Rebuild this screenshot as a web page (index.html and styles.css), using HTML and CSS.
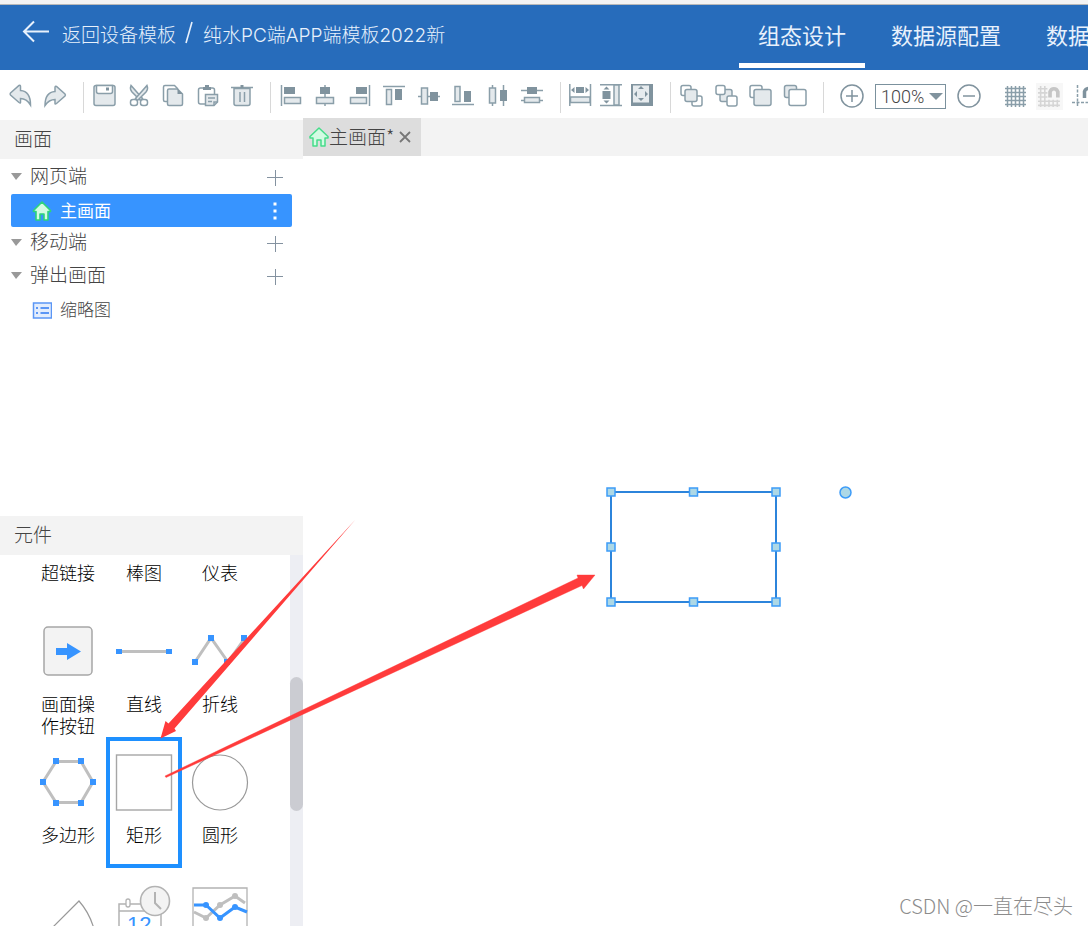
FILE: index.html
```html
<!DOCTYPE html>
<html lang="zh-CN">
<head>
  <meta charset="UTF-8" />
  <meta name="viewport" content="width=device-width, initial-scale=1" />
  <title>组态设计</title>
  <link rel="stylesheet" href="styles.css">
</head>
<body>
  <div class="top-edge"></div>
  <header class="header">
    <div class="crumbs">
      <a class="back" href="#">
        <svg width="28" height="24" viewBox="0 0 28 24"><path d="M12 1.500 2 11.500 12 21.500M2 11.500H27" fill="none" stroke="#e8f1fc" stroke-width="2"/></svg>
        返回设备模板</a>
      <svg class="slash" width="10" height="24" viewBox="0 0 10 24"><path d="M8 1 2 22" stroke="#e8f1fc" stroke-width="1.600"/></svg>
      <span class="project">纯水PC端APP端模板2022新</span>
    </div>
    <nav class="nav">
      <a class="active" href="#">组态设计</a>
      <a href="#">数据源配置</a>
      <a href="#">数据</a>
    </nav>
  </header>

  <div class="toolbar">
    <div class="group history">
      <button aria-label="撤销"><svg viewBox="0 0 24 24"><path class="l" d="M11 1.500Q12.500 .8 12.500 2.500V6.500C19.500 7 22.500 13 22.500 21 19.500 16 17 14.500 12.500 14.500V18.500Q12.500 19.500 11 18.500L2.500 11Q1.700 10 2.500 9Z"/></svg></button>
      <button aria-label="重做"><svg viewBox="0 0 24 24"><path class="l" d="M13.500 2.500Q12 1.800 12 3.500V7.500C5 8 2 14 2 21.500 5 17 7.500 15.500 12 15.500V19.500Q12 20.500 13.500 19.500L22 12Q22.800 11 22 10Z"/></svg></button>
    </div>
    <div class="group edit">
      <button aria-label="保存"><svg viewBox="0 0 24 24"><rect class="l" x="2" y="1.500" width="21" height="20" rx="2"/><path class="w" d="M4.500 1.500H20.500V7.500Q20.500 9.500 18.500 9.500H6.500Q4.500 9.500 4.500 7.500Z"/><rect class="d" x="14" y="3.500" width="3" height="3"/></svg></button>
      <button aria-label="剪切"><svg viewBox="0 0 24 24"><path class="l" d="M4 1.500Q2.500 5 5 8L13.500 16.500 15.500 14.500Z"/><path class="l" d="M20 1.500Q21.500 5 19 8L10.500 16.500 8.500 14.500Z"/><rect class="w" x="3.500" y="15.500" width="7" height="6" rx="2.500"/><rect class="w" x="13.500" y="15.500" width="7" height="6" rx="2.500"/></svg></button>
      <button aria-label="复制"><svg viewBox="0 0 24 24"><path class="w" d="M4 1.500H13.500L16.500 4.500V17.500H4Q2.500 17.500 2.500 16V3Q2.500 1.500 4 1.500Z"/><path class="l" d="M8 5H16.500L21.500 10V20Q21.500 21.500 20 21.500H8Q6.500 21.500 6.500 20V6.500Q6.500 5 8 5Z"/><path class="d" d="M16.500 5V10H21.500Z"/></svg></button>
      <button aria-label="粘贴"><svg viewBox="0 0 24 24"><rect class="w" x="2.500" y="4" width="16" height="16" rx="2"/><path class="d" d="M7 3H9V1H13V3H15V6H7Z"/><path class="l" d="M9.500 10.500H21.500V18L18 21.500H9.500Z"/><path class="s" d="M12 14H19M12 17.500H16M18 21.500V18H21.500"/></svg></button>
      <button aria-label="删除"><svg viewBox="0 0 24 24"><path class="l" d="M4 4.500H20V19.500Q20 21.500 18 21.500H6Q4 21.500 4 19.500Z"/><path class="s" d="M1 3.500H23M12 1V3.500M10 8V18M14.500 8V18"/><rect class="d" x="10.500" y="1" width="3" height="3"/></svg></button>
    </div>
    <div class="group align">
      <button aria-label="左对齐"><svg viewBox="0 0 24 24"><path class="s" d="M2.500 1V22"/><rect class="d" x="5" y="3" width="11" height="7"/><rect class="l" x="5.500" y="13.500" width="16" height="6"/></svg></button>
      <button aria-label="水平居中"><svg viewBox="0 0 24 24"><path class="s" d="M12 1V22"/><rect class="d" x="7" y="3" width="10" height="7"/><rect class="l" x="3.500" y="13.500" width="17" height="6"/></svg></button>
      <button aria-label="右对齐"><svg viewBox="0 0 24 24"><path class="s" d="M21.500 1V22"/><rect class="d" x="8" y="3" width="11" height="7"/><rect class="l" x="2.500" y="13.500" width="16" height="6"/></svg></button>
      <button aria-label="顶对齐"><svg viewBox="0 0 24 24"><path class="s" d="M1 2.500H23"/><rect class="l" x="4.500" y="5.500" width="5" height="15"/><rect class="d" x="13" y="5" width="7" height="11"/></svg></button>
      <button aria-label="垂直居中"><svg viewBox="0 0 24 24"><path class="s" d="M1 12.500H23"/><rect class="l" x="4.500" y="4" width="6" height="16"/><rect class="d" x="13" y="8" width="8" height="9"/></svg></button>
      <button aria-label="底对齐"><svg viewBox="0 0 24 24"><path class="s" d="M1 20.500H23"/><rect class="l" x="4" y="2.500" width="5" height="15"/><rect class="d" x="13" y="7" width="7" height="11"/></svg></button>
      <button aria-label="水平分布"><svg viewBox="0 0 24 24"><path class="s" d="M6.500 1V22M17.500 1V22"/><rect class="l" x="3.500" y="4" width="6" height="15"/><rect class="d" x="14" y="6" width="7" height="11"/></svg></button>
      <button aria-label="垂直分布"><svg viewBox="0 0 24 24"><path class="s" d="M1 6.500H23M1 16.500H23"/><rect class="d" x="7" y="3" width="10" height="7"/><rect class="l" x="4.500" y="13.500" width="15" height="5"/></svg></button>
    </div>
    <div class="group same">
      <button aria-label="等宽"><svg viewBox="0 0 24 24"><path class="s" d="M.8 0V22M21.500 0V22"/><rect class="d" x="7" y="3" width="8" height="6"/><path class="d" d="M5.500 3V9L2 6ZM16.500 3V9L20 6Z"/><rect class="l" x="1.500" y="13" width="19.500" height="5.500"/></svg></button>
      <button aria-label="等高"><svg viewBox="0 0 24 24"><path class="s" d="M0 .7H22M0 21.500H22"/><rect class="d" x="2.500" y="7" width="8" height="8"/><path class="d" d="M3.500 5.500H9.500L6.500 2.500ZM3.500 16.500H9.500L6.500 19.500Z"/><rect class="l" x="14" y="1" width="5" height="20"/></svg></button>
      <button aria-label="等大小"><svg viewBox="0 0 24 24"><rect class="d" x="1" y="0" width="22" height="22"/><rect x="3" y="1.500" width="16" height="17" fill="#e6ebee"/><path class="d" d="M8 5H14L11 2ZM8 14H14L11 17ZM7 7V13L4 10ZM15 7V13L18 10Z"/></svg></button>
    </div>
    <div class="group layers">
      <button aria-label="上移一层"><svg viewBox="0 0 24 24"><rect class="w" x="2" y="1.500" width="10" height="10" rx="2"/><rect class="w" x="13" y="12" width="10" height="10" rx="2"/><rect class="l" x="6" y="5.500" width="12" height="12" rx="2"/></svg></button>
      <button aria-label="下移一层"><svg viewBox="0 0 24 24"><rect class="l" x="6" y="5.500" width="12" height="12" rx="2"/><rect class="w" x="2" y="1.500" width="9" height="9" rx="2"/><rect class="w" x="13" y="12" width="10" height="10" rx="2"/></svg></button>
      <button aria-label="置顶"><svg viewBox="0 0 24 24"><rect class="w" x="2" y="1.500" width="12" height="12" rx="2"/><rect class="l" x="6" y="5.500" width="17" height="16" rx="2"/></svg></button>
      <button aria-label="置底"><svg viewBox="0 0 24 24"><rect class="l" x="1.500" y="1.500" width="12" height="12" rx="2"/><rect class="w" x="6" y="5.500" width="17" height="16" rx="2"/></svg></button>
    </div>
    <div class="group zoom">
      <button aria-label="放大"><svg viewBox="0 0 24 24"><circle class="o" cx="12" cy="12" r="11"/><path class="o" d="M6 12H18M12 6V18"/></svg></button>
      <label class="scale">
        <select aria-label="缩放比例"><option>100%</option></select>
      </label>
      <button aria-label="缩小"><svg viewBox="0 0 24 24"><circle class="o" cx="12" cy="12" r="11"/><path class="o" d="M6 12H18"/></svg></button>
    </div>
    <div class="group grid-tools">
      <button aria-label="网格"><svg viewBox="0 0 24 24"><path class="s" d="M4.500 2V23M8.500 2V23M12.500 2V23M16.500 2V23M20.500 2V23M2 4.500H23M2 8.500H23M2 12.500H23M2 16.500H23M2 20.500H23"/></svg></button>
      <button class="off" aria-label="吸附网格"><svg viewBox="0 0 24 24"><path d="M3.500 2V22M7.500 2V22M11.500 15V22M15.500 15V22M19.500 15V22M1 4.500H10M1 8.500H10M1 12.500H10M1 16.500H22M1 20.500H22" fill="none" stroke="#d5d5d5" stroke-width="1.500"/><path d="M12.500 13V7.500A4 4.500 0 0 1 20 7.500V13" fill="none" stroke="#c6c6c6" stroke-width="3.500"/></svg></button>
      <button aria-label="吸附对象"><svg viewBox="0 0 24 24"><path class="s" stroke-dasharray="3 1.500" d="M5.500 1V23M0 18.500H23"/><path d="M12.500 14V7.500A4.500 4.500 0 0 1 21 7.500V14" fill="none" stroke="#80939e" stroke-width="3.500"/></svg></button>
    </div>
  </div>

  <div class="workspace">
    <aside class="sidebar">
      <section class="screens">
        <h2>画面</h2>
        <ul class="tree">
          <li class="node"><i class="caret"></i><span>网页端</span><button class="add" aria-label="添加网页端画面"></button></li>
          <li class="node leaf selected">
            <svg width="20" height="20" viewBox="0 0 20 20"><path d="M10 1 1.500 9.500V10.500H4V19H8V13H12V19H16V10.500H18.500V9.500Z" fill="#d3fbe3" stroke="#2dd47b" stroke-width="1.600" stroke-linejoin="round"/></svg>
            <span>主画面</span>
            <button class="more" aria-label="更多"><svg width="4" height="18" viewBox="0 0 4 18"><path d="M.5 .5H3.500V3.500H.5ZM.5 7.500H3.500V10.500H.5ZM.5 14.500H3.500V17.500H.5Z" fill="#fff"/></svg></button>
          </li>
          <li class="node"><i class="caret"></i><span>移动端</span><button class="add" aria-label="添加移动端画面"></button></li>
          <li class="node"><i class="caret"></i><span>弹出画面</span><button class="add" aria-label="添加弹出画面"></button></li>
          <li class="node leaf">
            <svg width="20" height="20" viewBox="0 0 20 20"><rect x="1.500" y="3" width="18" height="15" fill="#e3edfd" stroke="#5b96f5" stroke-width="1.500"/><path d="M4 8H6M4 13H6M8.500 8H17M8.500 13H17" stroke="#5b96f5" stroke-width="2"/></svg>
            <span>缩略图</span>
          </li>
        </ul>
      </section>

      <section class="components">
        <h2>元件</h2>
        <div class="palette">
          <div class="shapes">
            <button class="shape text-only">超链接</button>
            <button class="shape text-only">棒图</button>
            <button class="shape text-only">仪表</button>

            <button class="shape">
              <svg width="58" height="58" viewBox="0 0 58 58"><rect x="5" y="5" width="48" height="48" rx="4" fill="#f3f3f3" stroke="#a6a6a6" stroke-width="1.500"/><path d="M17 26H28V21L42 29.500 28 38V33H17Z" fill="#3794ff"/></svg>
              <span>画面操作按钮</span>
            </button>
            <button class="shape">
              <svg width="58" height="58" viewBox="0 0 58 58"><path d="M4 29.500H54" stroke="#bfbfbf" stroke-width="3"/><path d="M1 27H7V32H1ZM51 27H57V32H51Z" fill="#3794ff"/></svg>
              <span>直线</span>
            </button>
            <button class="shape">
              <svg width="58" height="58" viewBox="0 0 58 58"><path d="M4 40 20 16 37 40 54 16" fill="none" stroke="#bfbfbf" stroke-width="3"/><path d="M1 37H7V43H1ZM17 13H23V19H17ZM33 37H39V43H33ZM50 13H56V19H50Z" fill="#3794ff"/></svg>
              <span>折线</span>
            </button>

            <button class="shape">
              <svg width="58" height="58" viewBox="0 0 58 58"><path d="M17 8.500H42L54 29 42 49.500H17L4 29Z" fill="none" stroke="#bfbfbf" stroke-width="3"/><path d="M14 5H20V11H14ZM39 5H45V11H39ZM1 26H7V32H1ZM51 26H57V32H51ZM14 47H20V53H14ZM39 47H45V53H39Z" fill="#3794ff"/></svg>
              <span>多边形</span>
            </button>
            <button class="shape picked">
              <svg width="58" height="58" viewBox="0 0 58 58"><rect x="1.500" y="2" width="55" height="55" fill="none" stroke="#a6a6a6" stroke-width="1.400"/></svg>
              <span>矩形</span>
            </button>
            <button class="shape">
              <svg width="58" height="58" viewBox="0 0 58 58"><circle cx="29" cy="29.500" r="27.500" fill="none" stroke="#999" stroke-width="1.200"/></svg>
              <span>圆形</span>
            </button>

            <button class="shape" aria-label="扇形">
              <svg width="58" height="58" viewBox="0 0 58 58"><path d="M2 55 40 17Q54 33 57 55" fill="none" stroke="#999" stroke-width="1.200"/></svg>
            </button>
            <button class="shape" aria-label="日期时间">
              <svg width="58" height="58" viewBox="0 0 58 58"><path d="M4 58V20H46V58M4 27H46" fill="none" stroke="#b3b3b3" stroke-width="1.500"/><rect x="11" y="15" width="4" height="8" rx="2" fill="#fff" stroke="#b3b3b3" stroke-width="1.300"/><circle cx="40" cy="17" r="14.500" fill="#f3f3f3" stroke="#b3b3b3" stroke-width="1.600"/><path d="M40 8V19L46 25" fill="none" stroke="#b3b3b3" stroke-width="2"/><text class="day" x="12" y="48">12</text></svg>
            </button>
            <button class="shape" aria-label="曲线">
              <svg width="58" height="58" viewBox="0 0 58 58"><path d="M2 58V4H56V58" fill="none" stroke="#b3b3b3" stroke-width="1.300"/><path d="M3 28 15 34 29 21 44 12 54 19" fill="none" stroke="#bfbfbf" stroke-width="3"/><g fill="#bfbfbf"><circle cx="15" cy="34" r="3"/><circle cx="29" cy="21" r="3"/><circle cx="44" cy="12" r="3"/></g><path d="M3 21H15L29 34 44 23 56 28" fill="none" stroke="#3794ff" stroke-width="3"/><g fill="#3794ff"><circle cx="15" cy="21" r="3"/><circle cx="29" cy="34" r="3"/><circle cx="44" cy="23" r="3"/></g></svg>
            </button>
          </div>
          <div class="scrollbar"><div class="thumb"></div></div>
        </div>
      </section>
    </aside>

    <main class="editor">
      <div class="tabs">
        <div class="tab">
          <svg width="20" height="20" viewBox="0 0 20 20"><path d="M10 1 1 9.500V11H4V19H8V13H12V19H16V11H19V9.500Z" fill="#d3fbe3" stroke="#45dd8a" stroke-width="1.500" stroke-linejoin="round"/></svg>
          <span>主画面*</span>
          <button aria-label="关闭"><svg width="12" height="12" viewBox="0 0 12 12"><path d="M1 1 11 11M11 1 1 11" stroke="#777" stroke-width="1.800"/></svg></button>
        </div>
      </div>
      <div class="canvas">
        <svg class="selection" width="250" height="124" viewBox="0 0 250 124">
          <rect x="8" y="8" width="165" height="110" fill="#fff" stroke="#5a6270" stroke-width="2"/>
          <rect x="8" y="8" width="165" height="110" fill="none" stroke="#1e90ff" stroke-width="2" stroke-opacity=".75"/>
          <g fill="#add8e6" stroke="#3d9cf8" stroke-width="1.500">
            <rect x="4" y="4" width="8" height="8"/><rect x="86.500" y="4" width="8" height="8"/><rect x="169" y="4" width="8" height="8"/>
            <rect x="4" y="59" width="8" height="8"/><rect x="169" y="59" width="8" height="8"/>
            <rect x="4" y="114" width="8" height="8"/><rect x="86.500" y="114" width="8" height="8"/><rect x="169" y="114" width="8" height="8"/>
            <circle cx="242.500" cy="8.500" r="5.500"/>
          </g>
        </svg>
      </div>
    </main>
  </div>

  <svg class="arrows" width="600" height="760" viewBox="0 0 600 760">
    <path d="M355.500 519.500 174.500 728.500 176 731 160.500 738.500 165.500 721 168.500 723.500Z" fill="#ff3b3b"/>
    <path d="M165 776 578 578 577 575 595 575 583.500 589 582 585.500 166 777.500Z" fill="#ff3b3b" stroke="#ff3b3b" stroke-width=".4"/>
  </svg>
  <div class="watermark">CSDN @一直在尽头</div>
</body>
</html>
```

FILE: styles.css
```css
* {
  box-sizing: border-box;
}
body {
  margin: 0;
  height: 100vh;
  display: flex;
  flex-direction: column;
  overflow: hidden;
  position: relative;
  font-family: "Noto Sans CJK SC", sans-serif;
  font-weight: 300;
  font-size: 19px;
  color: #444;
  background: #fff;
}
button {
  padding: 0;
  border: none;
  background: none;
  font: inherit;
  color: inherit;
  cursor: pointer;
}
svg {
  display: block;
  flex: none;
}
a {
  color: inherit;
  text-decoration: none;
}
h2 {
  margin: 0;
  padding: 0 0 4px 14px;
  font-size: 19px;
  font-weight: 300;
  line-height: 35px;
  background: #f3f3f3;
}

/* header */
.top-edge {
  flex: none;
  height: 5px;
  background: #f3f3f3;
  border-bottom: 1px solid #b8b8b8;
}
.header {
  flex: none;
  display: grid;
  grid-template-columns: 739px minmax(0, 1fr);
  height: 65px;
  background: #276cbb;
  color: #e8f1fc;
}
.crumbs {
  display: flex;
  align-items: center;
  height: 56px;
  padding-left: 22px;
}
.back {
  display: flex;
  align-items: center;
  gap: 12px;
}
.back svg {
  margin-bottom: 2px;
}
.slash {
  margin: 0 9px 0 8px;
}
.project {
  font-family: Inter, "Noto Sans CJK SC", sans-serif;
}
.nav {
  display: flex;
  gap: 7px;
  overflow: hidden;
  font-size: 22px;
  font-weight: 400;
}
.nav a {
  flex: none;
  height: 63px;
  padding: 0 19px;
  line-height: 59px;
  border-bottom: 5px solid transparent;
}
.nav .active {
  border-color: #fff;
}

/* toolbar */
.toolbar {
  flex: none;
  display: flex;
  height: 48px;
  padding-top: 12px;
  overflow: hidden;
}
.group {
  flex: none;
  display: flex;
  align-items: center;
  justify-content: space-between;
  height: 31px;
  padding: 0 16px 3px 8px;
  border-right: 1px solid #d8d8d8;
}
.group button {
  width: 24px;
  height: 24px;
}
.history { width: 84px; }
.edit { width: 187px; }
.align { width: 290px; }
.same { width: 110px; }
.layers { width: 153px; }
.group.zoom {
  gap: 11px;
  padding-left: 16px;
  padding-right: 22px;
  border: none;
}
.group.grid-tools {
  gap: 9px;
  padding-left: 0;
  padding-right: 0;
  border: none;
}
.group .off {
  width: 27px;
  height: 27px;
  padding: 1px;
  background: #f7f7f7;
}
.group .l {
  fill: #e4e9ec;
  stroke: #8a9ea9;
  stroke-width: 1.5;
}
.group .w {
  fill: #fff;
  stroke: #8a9ea9;
  stroke-width: 1.5;
}
.group .d {
  fill: #80939e;
}
.group .s {
  fill: none;
  stroke: #8a9ea9;
  stroke-width: 1.5;
}
.group .o {
  fill: none;
  stroke: #80939e;
  stroke-width: 1.5;
}
.scale {
  position: relative;
}
.scale select {
  display: block;
  appearance: none;
  width: 71px;
  height: 25px;
  padding: 0 0 0 5px;
  border: 1px solid #7b919d;
  border-radius: 0;
  background: #fff;
  font-family: Roboto, sans-serif;
  font-size: 18px;
  font-weight: 300;
  color: #444;
}
.scale::after {
  content: "";
  position: absolute;
  right: 3px;
  top: 9px;
  border: 7px solid transparent;
  border-top-color: #80939e;
  border-bottom: none;
  pointer-events: none;
}

/* left side */
.workspace {
  flex: 1;
  display: flex;
  min-height: 0;
}
.sidebar {
  flex: none;
  display: flex;
  flex-direction: column;
  width: 303px;
  padding-top: 2px;
}
.screens {
  flex: none;
  height: 396px;
}
.tree {
  margin: 0;
  padding: 2px 11px;
  list-style: none;
}
.node {
  display: flex;
  align-items: center;
  height: 33px;
  padding-right: 9px;
  line-height: 28px;
}
.node span {
  flex: 1;
  padding-bottom: 5px;
}
.caret {
  margin: 0 8px 2px 0;
  border: 6px solid transparent;
  border-top: 7px solid #999;
  border-bottom: none;
  border-left-width: 5px;
}
.add {
  width: 16px;
  height: 16px;
  background:
    linear-gradient(#8492a0, #8492a0) center / 16px 1px no-repeat,
    linear-gradient(#8492a0, #8492a0) center / 1px 16px no-repeat;
}
.leaf {
  gap: 8px;
  padding-left: 21px;
  padding-right: 15px;
  font-size: 17px;
}
.leaf span {
  padding-bottom: 2px;
}
.selected {
  border-radius: 2px;
  background: #3794ff;
  color: #fff;
  font-weight: 400;
}

.components {
  flex: 1;
  display: flex;
  flex-direction: column;
  min-height: 0;
}
.palette {
  flex: 1;
  display: grid;
  grid-template-columns: 1fr 13px;
  min-height: 0;
  overflow: hidden;
}
.shapes {
  display: grid;
  grid-template-columns: repeat(3, 76px);
  grid-template-rows: 51px;
  grid-auto-rows: 131px;
  padding-left: 30px;
}
.shape {
  display: flex;
  flex-direction: column;
  align-items: center;
  padding-top: 16px;
  font-size: 18px;
  line-height: 22px;
  color: #000;
}
.shape span {
  width: 56px;
  margin-top: 12px;
}
.text-only {
  padding-top: 6px;
}
.picked {
  box-shadow: inset 0 0 0 4px #1e90ff;
}
.day {
  font-family: "Liberation Sans", sans-serif;
  font-size: 22px;
  fill: #3794ff;
}
.scrollbar {
  padding-top: 122px;
  background: #edeef3;
}
.thumb {
  height: 134px;
  border-radius: 7px;
  background: #cbccd2;
}

/* editor */
.editor {
  flex: 1;
  display: flex;
  flex-direction: column;
  min-width: 0;
}
.tabs {
  display: flex;
  height: 38px;
  background: #f3f3f3;
}
.tab {
  display: flex;
  align-items: center;
  padding: 0 10px 0 6px;
  background: #ddd;
}
.tab span {
  padding-bottom: 3px;
}
.tab button {
  margin-left: 5px;
}
.canvas {
  flex: 1;
  position: relative;
}
.selection {
  position: absolute;
  left: 300px;
  top: 328px;
}

/* annotations over the page */
.arrows {
  position: absolute;
  left: 0;
  top: 0;
  overflow: visible;
  pointer-events: none;
}
.watermark {
  position: absolute;
  right: 15px;
  bottom: 5px;
  font-size: 20px;
  line-height: 30px;
  color: #8c8c8c;
}
```
